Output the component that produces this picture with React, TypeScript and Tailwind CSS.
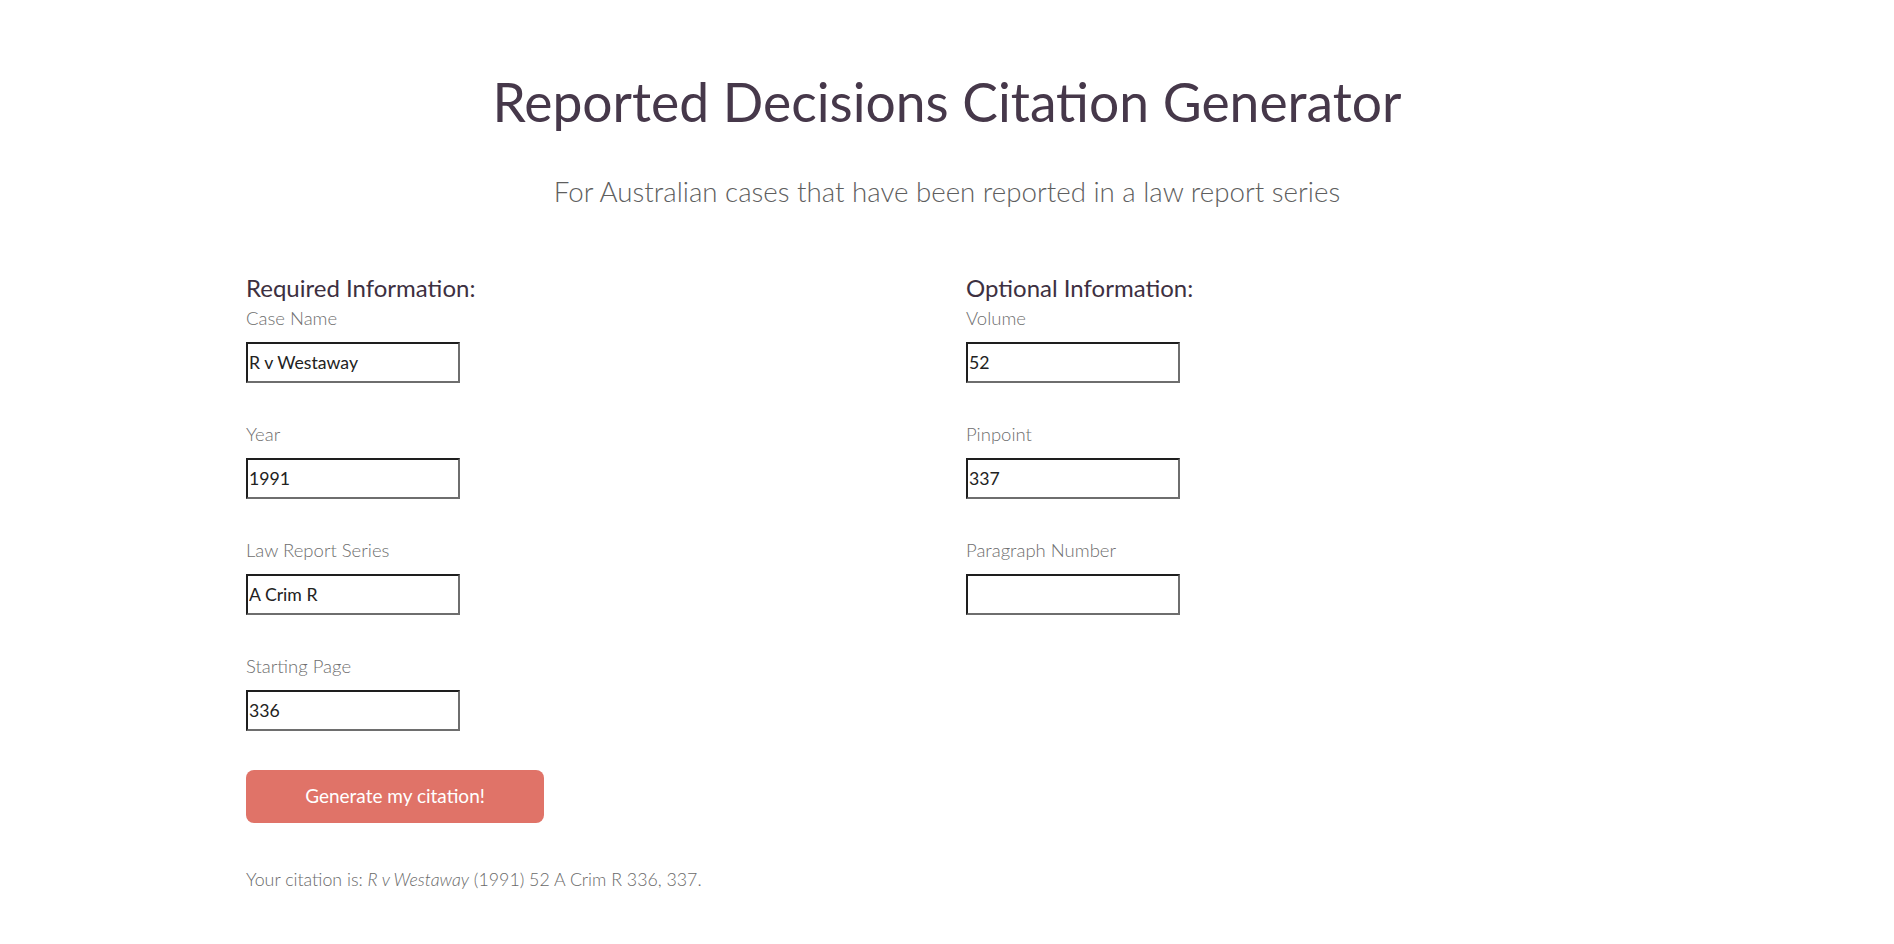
import React from "react";

const font = { fontFamily: "Lato, 'Noto Sans', sans-serif" };

function Field({ label, value }: { label: string; value: string }) {
  return (
    <div className="mb-[39px]">
      <div className="text-[18.5px] leading-[24px] font-light text-[#6e6e6e]">{label}</div>
      <input
        readOnly
        value={value}
        className="mt-[12px] block w-[214px] h-[41px] border-2 border-t-[#1e1e1e] border-l-[#1e1e1e] border-b-[#6e6e6e] border-r-[#6e6e6e] bg-white px-[1px] text-[17.7px] text-[#222] outline-none"
        style={font}
      />
    </div>
  );
}

export default function App() {
  return (
    <div className="min-h-screen bg-white" style={font}>
      <h1 className="pt-[69px] text-center text-[53.4px] leading-[64px] font-normal text-[#46384a]">
        Reported Decisions Citation Generator
      </h1>
      <p className="mt-[41px] text-center text-[27.7px] leading-[36px] font-light text-[#5e5e5e]">
        For Australian cases that have been reported in a law report series
      </p>
      <div className="mt-[64px] flex pl-[246px]">
        <div className="w-[720px]">
          <h2 className="text-[24px] leading-[28px] text-[#3d3041]">Required Information:</h2>
          <div className="mt-[4px]">
            <Field label="Case Name" value="R v Westaway" />
            <Field label="Year" value="1991" />
            <Field label="Law Report Series" value="A Crim R" />
            <Field label="Starting Page" value="336" />
          </div>
          <button className="block w-[298px] h-[53px] rounded-[8px] bg-[#e07368] text-white text-[19px]" style={font}>
            Generate my citation!
          </button>
          <p className="mt-[44px] text-[17.8px] leading-[24px] font-light text-[#6a6a6a]">
            Your citation is: <i>R v Westaway</i> (1991) 52 A Crim R 336, 337.
          </p>
        </div>
        <div className="w-[400px]">
          <h2 className="text-[24px] leading-[28px] text-[#3d3041]">Optional Information:</h2>
          <div className="mt-[4px]">
            <Field label="Volume" value="52" />
            <Field label="Pinpoint" value="337" />
            <Field label="Paragraph Number" value="" />
          </div>
        </div>
      </div>
    </div>
  );
}
